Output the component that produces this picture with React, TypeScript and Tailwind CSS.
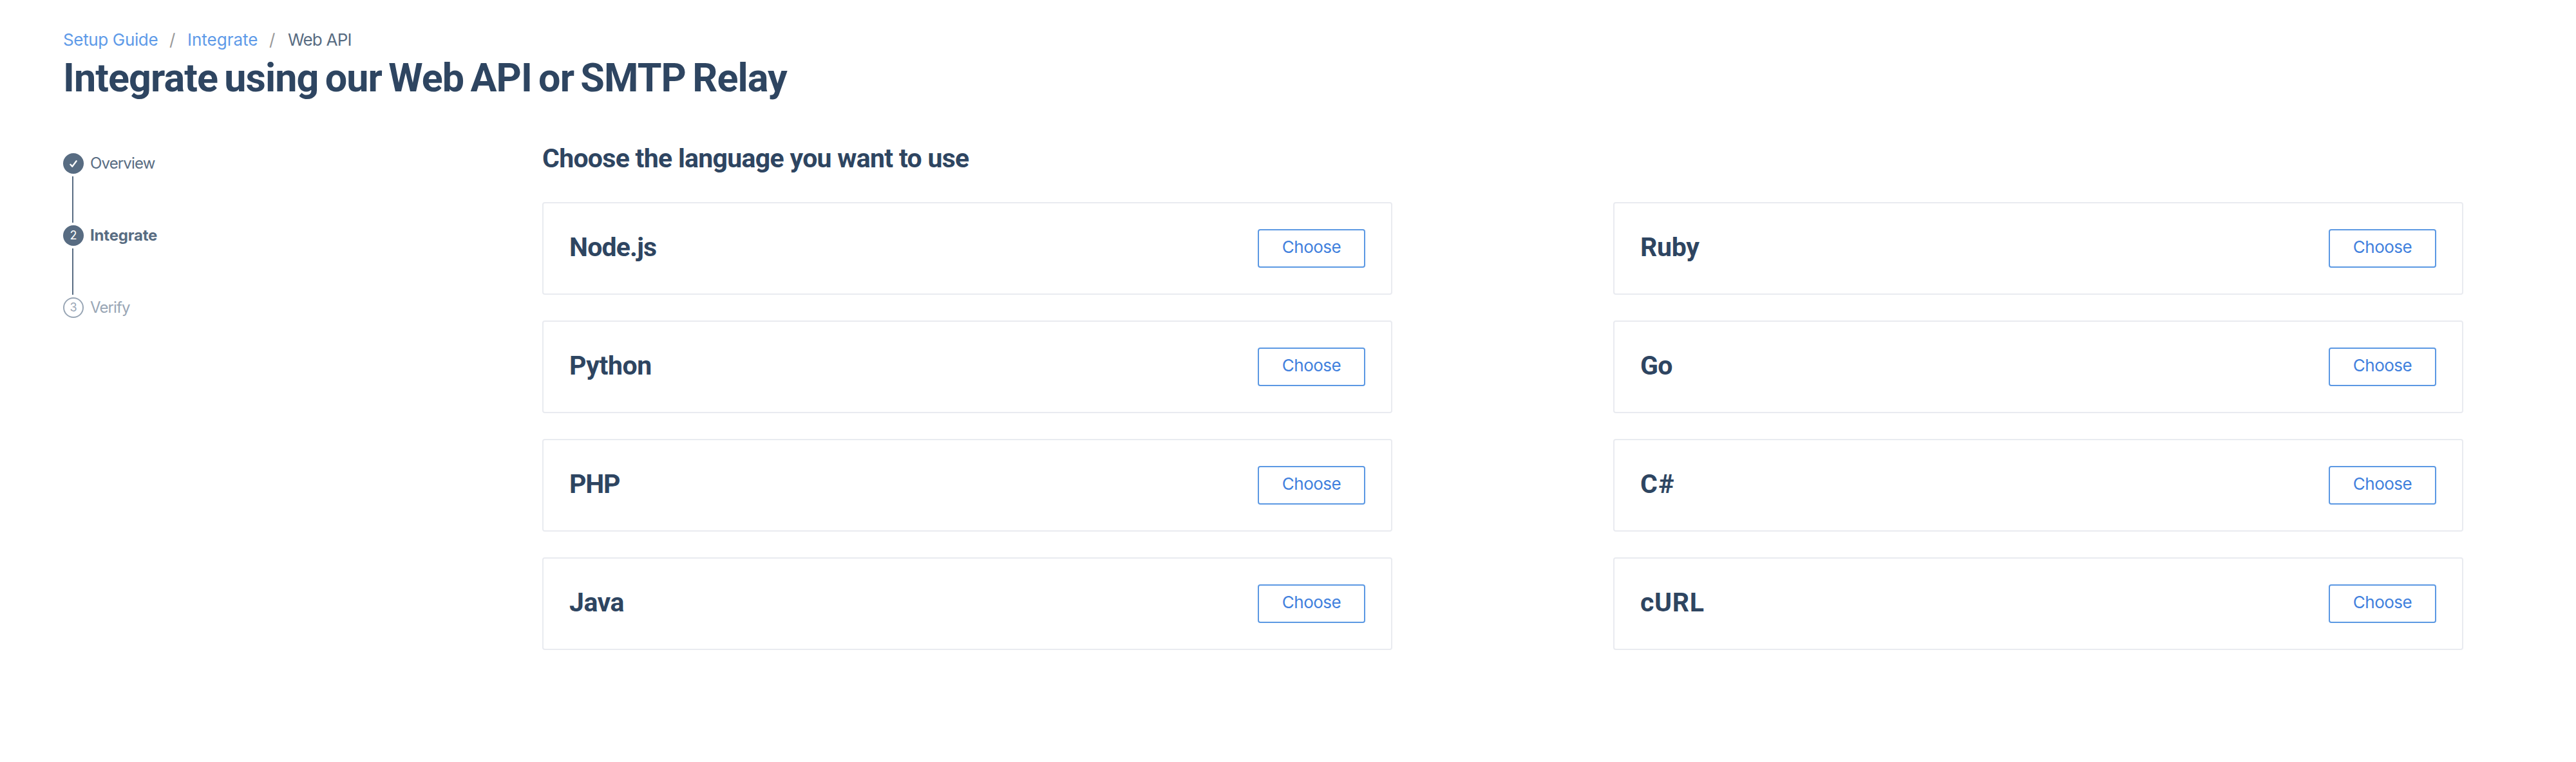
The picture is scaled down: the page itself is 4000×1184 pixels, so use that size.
const LANGUAGES: { name: string; tracking: string }[] = [
  { name: "Node.js", tracking: "tracking-[-0.8px]" },
  { name: "Ruby", tracking: "tracking-[-0.3px]" },
  { name: "Python", tracking: "tracking-[-0.4px]" },
  { name: "Go", tracking: "tracking-[-0.7px]" },
  { name: "PHP", tracking: "tracking-[-1.2px]" },
  { name: "C#", tracking: "tracking-[1.5px]" },
  { name: "Java", tracking: "tracking-[-0.5px]" },
  { name: "cURL", tracking: "tracking-[0.7px]" },
];

function LanguageCard({ name, tracking }: { name: string; tracking: string }) {
  return (
    <div className="flex h-36 items-center justify-between rounded-[4px] border-2 border-[#e9ebf0] px-10">
      <h3 className={`pb-1 font-['Roboto',sans-serif] text-[41px] leading-[48px] font-bold text-[#2e4561] ${tracking}`}>{name}</h3>
      <button className="flex h-[60px] w-[167px] items-center justify-center rounded-[4px] border-2 border-[#5b98e3] pb-[5px] text-[26px] leading-8 tracking-[-0.5px] text-[#3f80dd]">
        Choose
      </button>
    </div>
  );
}

function Connector() {
  return <div className="my-1 ml-3.5 h-[72px] w-0.5 bg-[#586c82]" />;
}

export default function App() {
  return (
    <div className="min-h-[1184px] w-[4000px] bg-white pt-11 pl-[98px] font-['Inter',sans-serif]">
      <nav className="flex h-9 text-[26px] leading-[35px] text-[#5e9ae8]">
        <a className="w-[165px] tracking-[-0.35px]">Setup Guide</a>
        <span className="w-[28px] text-[#999999]">/</span>
        <a className="w-[127px]">Integrate</a>
        <span className="w-[29px] text-[#999999]">/</span>
        <span className="tracking-[-0.8px] text-[#586c82]">Web API</span>
      </nav>
      <h1 className="mt-1.5 font-['Roboto',sans-serif] text-[61px] leading-[71px] font-bold tracking-[-0.9px] [word-spacing:-4px] text-[#2e4561]">
        Integrate using our Web API or SMTP Relay
      </h1>

      <div className="mt-[65px] flex">
        <aside className="w-[744px] pt-4 text-2xl leading-8 text-[#586c82]">
          <div className="flex h-8 gap-2.5">
            <span className="flex size-8 items-center justify-center rounded-full bg-[#586c82]">
              <svg width="14" height="14" viewBox="0 0 14 14" fill="none" stroke="white" strokeWidth="2.3" strokeLinecap="round" strokeLinejoin="round">
                <path d="M2.4 8.6 5.2 11.8 11.6 3.2" />
              </svg>
            </span>
            <span className="tracking-[-0.85px]">Overview</span>
          </div>
          <Connector />
          <div className="flex h-8 gap-2.5">
            <span className="flex size-8 items-center justify-center rounded-full bg-[#586c82] text-[18px] leading-none text-white">2</span>
            <span className="font-bold tracking-[-0.2px]">Integrate</span>
          </div>
          <Connector />
          <div className="flex h-8 gap-2.5 text-[#99a6b5]">
            <span className="flex size-8 items-center justify-center rounded-full border-2 border-[#99a6b5] text-[18px] leading-none">3</span>
            <span className="tracking-[-0.9px]">Verify</span>
          </div>
        </aside>

        <main>
          <h2 className="font-['Roboto',sans-serif] text-[41px] leading-[48px] font-bold tracking-[-0.7px] text-[#2e4561]">
            Choose the language you want to use
          </h2>
          <div className="mt-11 grid grid-cols-[1320px_1320px] gap-x-[343px] gap-y-10">
            {LANGUAGES.map((l) => (
              <LanguageCard key={l.name} name={l.name} tracking={l.tracking} />
            ))}
          </div>
        </main>
      </div>
    </div>
  );
}
